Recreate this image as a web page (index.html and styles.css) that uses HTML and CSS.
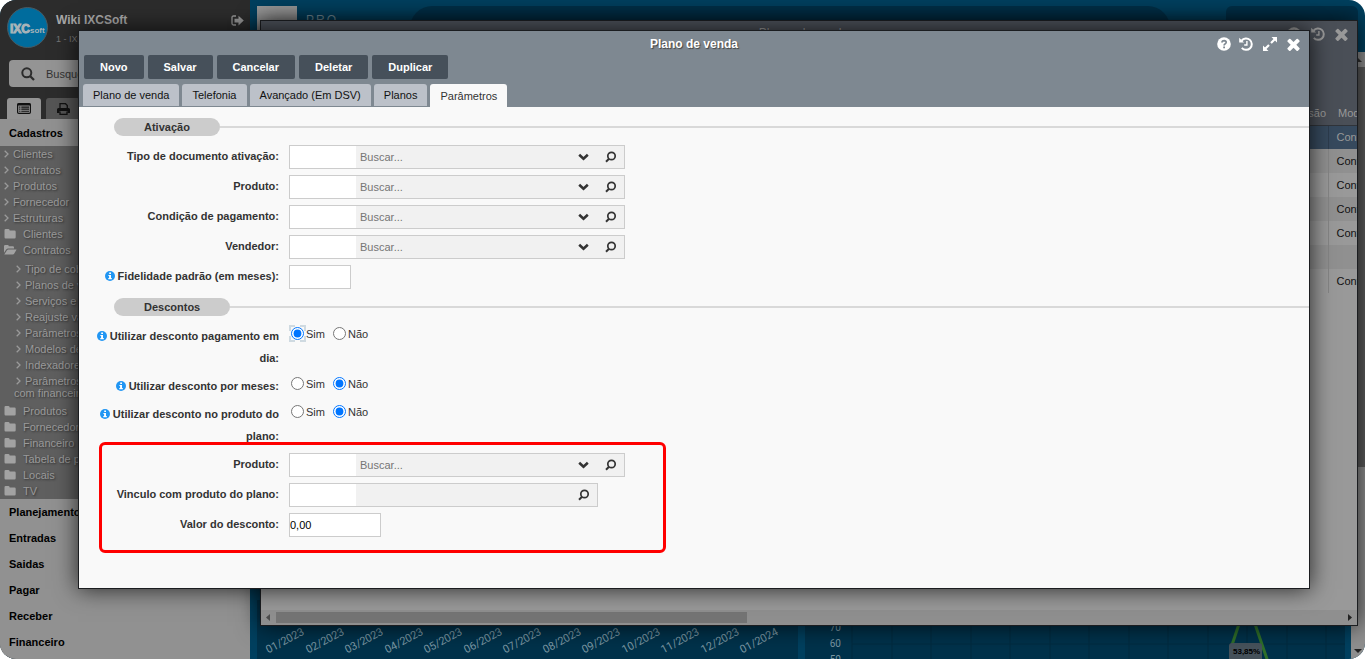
FILE: index.html
```html
<!DOCTYPE html>
<html lang="pt-BR">
<head>
<meta charset="utf-8">
<meta name="viewport" content="width=device-width, initial-scale=1">
<title>Plano de venda</title>
<link rel="stylesheet" href="styles.css">
</head>
<body>
<svg class="defs" aria-hidden="true">
  <symbol id="i-times" viewBox="300 300 1190 1254"><path d="M1490 1322q0 40-28 68l-136 136q-28 28-68 28t-68-28l-294-294-294 294q-28 28-68 28t-68-28l-136-136q-28-28-28-68t28-68l294-294-294-294q-28-28-28-68t28-68l136-136q28-28 68-28t68 28l294 294 294-294q28-28 68-28t68 28l136 136q28 28 28 68t-28 68l-294 294 294 294q28 28 28 68z" fill="currentColor"/></symbol>
  <symbol id="i-help" viewBox="0 0 14 14"><circle cx="7" cy="7" r="6.8" fill="currentColor"/><path d="M4.7 5.4Q5.2 3.6 7.1 3.6Q9.2 3.7 9.2 5.3Q9.2 6.3 8 6.9Q7.1 7.4 7.1 8.5" fill="none" stroke="var(--hole)" stroke-width="1.7"/><path d="M6.2 9.5h1.8v1.7H6.2z" fill="var(--hole)"/></symbol>
  <symbol id="i-history" viewBox="0 0 14 14"><path d="M2.6 3.6A5.7 5.7 0 1 1 2.8 10.9" fill="none" stroke="currentColor" stroke-width="2"/><path d="M0.2 .8V5.4H5z" fill="currentColor"/><path d="M7.9 4v4H5.2" fill="none" stroke="currentColor" stroke-width="1.4"/></symbol>
  <symbol id="i-expand" viewBox="0 0 14 14"><path d="M8.5 0H14v5.500zM0 8.500V14h5.500z" fill="currentColor"/><path d="M11.800 2.200L8 6M6 8L2.200 11.800" stroke="currentColor" stroke-width="2.200" fill="none"/></symbol>
  <symbol id="i-info" viewBox="0 0 10 10"><circle cx="5" cy="5" r="5" fill="#2196f3"/><path d="M4.200 1.500h1.800v1.500H4.200zM3.400 3.900H6v3.200h.8v1.200H3.300V7.100h.8V5h-.7z" fill="#fff"/></symbol>
  <symbol id="i-down" viewBox="0 0 11 8"><path d="M1.200 1.700L5.500 5.700L9.800 1.700" fill="none" stroke="currentColor" stroke-width="2.600"/></symbol>
  <symbol id="i-find" viewBox="0 0 12 12"><circle cx="6.500" cy="5" r="3.700" fill="none" stroke="currentColor" stroke-width="1.700"/><path d="M4 7.700L1 10.700" stroke="currentColor" stroke-width="2"/></symbol>
  <symbol id="i-right" viewBox="0 0 5 8"><path d="M.7 .7L4 4L.7 7.300" fill="none" stroke="currentColor" stroke-width="1.300"/></symbol>
  <symbol id="i-folder" viewBox="0 0 12 10"><path d="M0 1.200Q0 0 1.200 0H4Q5.200 0 5.200 1.500H10Q11.200 1.500 11.200 2.700V8.300Q11.200 9.500 10 9.500H1.200Q0 9.500 0 8.300z" fill="currentColor"/></symbol>
  <symbol id="i-folder-open" viewBox="0 0 13 10"><path d="M0 7.700V1.200Q0 0 1.200 0H3.600Q4.800 0 4.800 1.300H8.800Q10 1.300 10 2.500V3.600H4.200Q3 3.600 2.200 4.600zM.3 9.500L3 5.300Q3.500 4.500 4.300 4.500H12.600L10.300 8.500Q9.700 9.500 8.700 9.500z" fill="currentColor"/></symbol>
  <symbol id="i-logout" viewBox="0 0 13 12"><path d="M5 1H2.500Q1 1 1 2.500V8.500Q1 10 2.500 10H5" fill="none" stroke="currentColor" stroke-width="1.300"/><path d="M3.500 3.800H7.500V.8L12.800 5.600L7.500 10.400V7.400H3.500z" fill="currentColor"/></symbol>
  <symbol id="i-search" viewBox="0 0 14 14"><circle cx="5.800" cy="5.800" r="4.500" fill="none" stroke="currentColor" stroke-width="2"/><path d="M9 9L13 13" stroke="currentColor" stroke-width="2.300"/></symbol>
  <symbol id="i-list" viewBox="0 0 14 11"><rect x=".6" y=".6" width="12.800" height="9.800" rx="1.200" fill="none" stroke="currentColor" stroke-width="1.200"/><path d="M.6 1.500H13.400" stroke="currentColor" stroke-width="2"/><path d="M2.200 4.100h1.200M4.300 4.100H12M2.200 6.100h1.200M4.300 6.100H12M2.200 8.200h1.200M4.300 8.200H12" stroke="currentColor" stroke-width="1.100"/></symbol>
  <symbol id="i-print" viewBox="0 0 13 12"><path d="M3 5V.7H8.500L10.300 2.500V5" fill="none" stroke="currentColor" stroke-width="1.300"/><path d="M0 6.500Q0 5 1.500 5H11.500Q13 5 13 6.500V10H10.500V8H2.500V10H0z" fill="currentColor"/><path d="M3 8.500V11.300H10V8.500" fill="none" stroke="currentColor" stroke-width="1.300"/></symbol>
</svg>

<div class="app">
  <aside class="sidebar">
    <div class="profile">
      <svg class="avatar" viewBox="0 0 42 42" role="img" aria-label="IXCsoft"><circle cx="21.500" cy="21.500" r="20" fill="#006c9d" stroke="#4a5960"/><text x="4" y="27" class="logo-mark"><tspan class="logo-big">IXC</tspan><tspan class="logo-small">soft</tspan></text></svg>
      <div class="who"><strong>Wiki IXCSoft</strong><span>1 - IXCSoft</span></div>
      <a href="#" class="logout" aria-label="Sair"><svg width="13" height="12"><use href="#i-logout"/></svg></a>
    </div>
    <label class="search"><svg width="14" height="14"><use href="#i-search"/></svg><input type="text" placeholder="Busque" aria-label="Busque"></label>
    <div class="side-tabs">
      <button type="button" class="side-tab on" aria-label="Menu"><svg width="14" height="11"><use href="#i-list"/></svg></button>
      <button type="button" class="side-tab" aria-label="Imprimir"><svg width="13" height="12"><use href="#i-print"/></svg></button>
    </div>
    <a href="#" class="group">Cadastros</a>
    <ul class="tree">
      <li><a href="#"><svg width="5" height="8"><use href="#i-right"/></svg>Clientes</a></li>
      <li><a href="#"><svg width="5" height="8"><use href="#i-right"/></svg>Contratos</a></li>
      <li><a href="#"><svg width="5" height="8"><use href="#i-right"/></svg>Produtos</a></li>
      <li><a href="#"><svg width="5" height="8"><use href="#i-right"/></svg>Fornecedor</a></li>
      <li><a href="#"><svg width="5" height="8"><use href="#i-right"/></svg>Estruturas</a></li>
      <li class="folder"><a href="#"><svg width="12" height="10"><use href="#i-folder"/></svg>Clientes</a></li>
      <li class="folder"><a href="#"><svg width="13" height="10"><use href="#i-folder-open"/></svg>Contratos</a>
        <ul class="subtree">
          <li><a href="#"><svg width="5" height="8"><use href="#i-right"/></svg>Tipo de cobrança</a></li>
          <li><a href="#"><svg width="5" height="8"><use href="#i-right"/></svg>Planos de venda</a></li>
          <li><a href="#"><svg width="5" height="8"><use href="#i-right"/></svg>Serviços e produtos</a></li>
          <li><a href="#"><svg width="5" height="8"><use href="#i-right"/></svg>Reajuste valores</a></li>
          <li><a href="#"><svg width="5" height="8"><use href="#i-right"/></svg>Parâmetros</a></li>
          <li><a href="#"><svg width="5" height="8"><use href="#i-right"/></svg>Modelos de contrato</a></li>
          <li><a href="#"><svg width="5" height="8"><use href="#i-right"/></svg>Indexadores</a></li>
          <li><a href="#"><svg width="5" height="8"><use href="#i-right"/></svg>Parâmetros<br>com financeiro</a></li>
        </ul>
      </li>
      <li class="folder"><a href="#"><svg width="12" height="10"><use href="#i-folder"/></svg>Produtos</a></li>
      <li class="folder"><a href="#"><svg width="12" height="10"><use href="#i-folder"/></svg>Fornecedor</a></li>
      <li class="folder"><a href="#"><svg width="12" height="10"><use href="#i-folder"/></svg>Financeiro</a></li>
      <li class="folder"><a href="#"><svg width="12" height="10"><use href="#i-folder"/></svg>Tabela de preço</a></li>
      <li class="folder"><a href="#"><svg width="12" height="10"><use href="#i-folder"/></svg>Locais</a></li>
      <li class="folder"><a href="#"><svg width="12" height="10"><use href="#i-folder"/></svg>TV</a></li>
    </ul>
    <nav class="groups">
      <a href="#" class="group">Planejamento</a>
      <a href="#" class="group">Entradas</a>
      <a href="#" class="group">Saidas</a>
      <a href="#" class="group">Pagar</a>
      <a href="#" class="group">Receber</a>
      <a href="#" class="group">Financeiro</a>
    </nav>
  </aside>

  <main class="dash">
    <div class="dash-top"><div class="brand-box"></div><div class="brand">PRO —</div><div class="pill"></div><div class="corner"></div></div>
    <div class="dash-body">
      <div class="charts">
        <svg class="chart">
          <g class="axis">
            <text transform="translate(48 34) rotate(-28)">01/2023</text><text transform="translate(88 34) rotate(-28)">02/2023</text><text transform="translate(127 34) rotate(-28)">03/2023</text><text transform="translate(167 34) rotate(-28)">04/2023</text><text transform="translate(206 34) rotate(-28)">05/2023</text><text transform="translate(246 34) rotate(-28)">06/2023</text><text transform="translate(285 34) rotate(-28)">07/2023</text><text transform="translate(325 34) rotate(-28)">08/2023</text><text transform="translate(364 34) rotate(-28)">09/2023</text><text transform="translate(404 34) rotate(-28)">10/2023</text><text transform="translate(443 34) rotate(-28)">11/2023</text><text transform="translate(483 34) rotate(-28)">12/2023</text><text transform="translate(522 34) rotate(-28)">01/2024</text>
          </g>
        </svg>
        <svg class="chart">
          <path d="M47 44H541M47 0V59M87 0V59M126 0V59M166 0V59M205 0V59M245 0V59M284 0V59M324 0V59M363 0V59M403 0V59M442 0V59M482 0V59M521 0V59" stroke="#002a40" fill="none"/>
          <g class="axis small"><text x="36" y="31">70</text><text x="36" y="47">60</text><text x="36" y="63">50</text></g>
          <path d="M427 45L434 24M450 24L463 62" stroke="#2f6f2a" stroke-width="3" fill="none"/>
          <rect x="424" y="43" width="33" height="20" rx="3" fill="#46525b"/><text x="428" y="54" class="tag">53,85%</text>
        </svg>
      </div>
      <div class="vscroll"><svg width="14" height="15" viewBox="0 0 14 15"><path d="M3 10L7 6L11 10z" fill="#333"/></svg><i></i><svg width="14" height="15" viewBox="0 0 14 15"><path d="M3 5H11L7 9z" fill="#222"/></svg></div>
    </div>
  </main>

  <section class="win back" aria-label="Planos de venda">
    <header class="back-head">
      <h2>Planos de venda</h2>
      <div class="tools"><button type="button" aria-label="Ajuda"><svg width="14" height="14"><use href="#i-help"/></svg></button><button type="button" aria-label="Histórico"><svg width="14" height="14"><use href="#i-history"/></svg></button><button type="button" aria-label="Fechar"><svg width="13" height="13"><use href="#i-times"/></svg></button></div>
    </header>
    <div class="back-body">
      <table class="grid">
        <thead><tr><th>Comissão</th><th class="last">Modelo</th></tr></thead>
        <tbody>
          <tr class="sel"><td></td><td class="last">Contrato</td></tr>
          <tr><td></td><td class="last">Contrato</td></tr>
          <tr><td></td><td class="last">Contrato</td></tr>
          <tr><td></td><td class="last">Contrato</td></tr>
          <tr><td></td><td class="last">Contrato</td></tr>
          <tr><td></td><td class="last"></td></tr>
          <tr><td></td><td class="last">Contrato</td></tr>
        </tbody>
      </table>
    </div>
    <div class="hscroll"><svg width="15" height="15" viewBox="0 0 15 15"><path d="M9 4V11L5 7.500z" fill="#4c4c4c"/></svg><i></i><svg width="15" height="15" viewBox="0 0 15 15"><path d="M6 4V11L10 7.500z" fill="#222"/></svg></div>
  </section>

  <section class="win modal" role="dialog" aria-labelledby="modal-title">
    <header class="modal-head">
      <div class="bar">
        <h1 id="modal-title">Plano de venda</h1>
        <div class="tools"><button type="button" aria-label="Ajuda"><svg width="14" height="14"><use href="#i-help"/></svg></button><button type="button" aria-label="Histórico"><svg width="14" height="14"><use href="#i-history"/></svg></button><button type="button" aria-label="Expandir"><svg width="14" height="14"><use href="#i-expand"/></svg></button><button type="button" aria-label="Fechar"><svg width="13" height="13"><use href="#i-times"/></svg></button></div>
      </div>
      <div class="actions"><button type="button">Novo</button><button type="button">Salvar</button><button type="button">Cancelar</button><button type="button">Deletar</button><button type="button">Duplicar</button></div>
      <div class="tabs" role="tablist"><button type="button" role="tab">Plano de venda</button><button type="button" role="tab">Telefonia</button><button type="button" role="tab">Avançado (Em DSV)</button><button type="button" role="tab">Planos</button><button type="button" role="tab" class="on" aria-selected="true">Parâmetros</button></div>
    </header>
    <form class="form">
      <h3 class="section"><span>Ativação</span></h3>
      <div class="rows">
        <div class="row"><label for="f1">Tipo de documento ativação:</label><div class="combo"><input class="code" id="f1" type="text"><input class="find" type="text" placeholder="Buscar..." aria-label="Buscar tipo de documento"><button type="button" aria-label="Abrir lista"><svg width="11" height="8"><use href="#i-down"/></svg></button><button type="button" aria-label="Pesquisar"><svg width="12" height="12"><use href="#i-find"/></svg></button></div></div>
        <div class="row"><label for="f2">Produto:</label><div class="combo"><input class="code" id="f2" type="text"><input class="find" type="text" placeholder="Buscar..." aria-label="Buscar produto"><button type="button" aria-label="Abrir lista"><svg width="11" height="8"><use href="#i-down"/></svg></button><button type="button" aria-label="Pesquisar"><svg width="12" height="12"><use href="#i-find"/></svg></button></div></div>
        <div class="row"><label for="f3">Condição de pagamento:</label><div class="combo"><input class="code" id="f3" type="text"><input class="find" type="text" placeholder="Buscar..." aria-label="Buscar condição"><button type="button" aria-label="Abrir lista"><svg width="11" height="8"><use href="#i-down"/></svg></button><button type="button" aria-label="Pesquisar"><svg width="12" height="12"><use href="#i-find"/></svg></button></div></div>
        <div class="row"><label for="f4">Vendedor:</label><div class="combo"><input class="code" id="f4" type="text"><input class="find" type="text" placeholder="Buscar..." aria-label="Buscar vendedor"><button type="button" aria-label="Abrir lista"><svg width="11" height="8"><use href="#i-down"/></svg></button><button type="button" aria-label="Pesquisar"><svg width="12" height="12"><use href="#i-find"/></svg></button></div></div>
        <div class="row"><label for="f5"><svg class="info" width="10" height="10"><use href="#i-info"/></svg>Fidelidade padrão (em meses):</label><input class="box short" id="f5" type="text"></div>
      </div>
      <h3 class="section"><span>Descontos</span></h3>
      <div class="rows">
        <div class="row"><span class="lbl" id="l6"><svg class="info" width="10" height="10"><use href="#i-info"/></svg>Utilizar desconto pagamento em dia:</span><div class="radios" role="radiogroup" aria-labelledby="l6"><label><span class="dot active"><input type="radio" name="r1" checked></span>Sim</label><label><span class="dot"><input type="radio" name="r1"></span>Não</label></div></div>
        <div class="row"><span class="lbl" id="l7"><svg class="info" width="10" height="10"><use href="#i-info"/></svg>Utilizar desconto por meses:</span><div class="radios" role="radiogroup" aria-labelledby="l7"><label><span class="dot"><input type="radio" name="r2"></span>Sim</label><label><span class="dot"><input type="radio" name="r2" checked></span>Não</label></div></div>
        <div class="row"><span class="lbl" id="l8"><svg class="info" width="10" height="10"><use href="#i-info"/></svg>Utilizar desconto no produto do plano:</span><div class="radios" role="radiogroup" aria-labelledby="l8"><label><span class="dot"><input type="radio" name="r3"></span>Sim</label><label><span class="dot"><input type="radio" name="r3" checked></span>Não</label></div></div>
        <div class="rows marked">
          <div class="row"><label for="f9">Produto:</label><div class="combo"><input class="code" id="f9" type="text"><input class="find" type="text" placeholder="Buscar..." aria-label="Buscar produto do desconto"><button type="button" aria-label="Abrir lista"><svg width="11" height="8"><use href="#i-down"/></svg></button><button type="button" aria-label="Pesquisar"><svg width="12" height="12"><use href="#i-find"/></svg></button></div></div>
          <div class="row"><label for="f10">Vinculo com produto do plano:</label><div class="combo narrow"><input class="code" id="f10" type="text"><input class="find" type="text" aria-label="Produto do plano"><button type="button" aria-label="Pesquisar"><svg width="12" height="12"><use href="#i-find"/></svg></button></div></div>
          <div class="row"><label for="f11">Valor do desconto:</label><input class="box" id="f11" type="text" value="0,00"></div>
        </div>
      </div>
    </form>
  </section>
</div>
</body>
</html>
```
FILE: styles.css
```css
*, *::before, *::after { box-sizing: border-box; }
body { margin: 0; background: #fff; font-family: "Liberation Sans", Arial, sans-serif; font-size: 11px; color: #333; }
button, input { font: inherit; margin: 0; padding: 0; border: 0; background: none; color: inherit; }
a { color: inherit; text-decoration: none; }
ul { list-style: none; margin: 0; padding: 0; }
h1, h2, h3 { margin: 0; font-size: 12px; }
svg { display: block; flex: none; }
.defs { position: absolute; width: 0; height: 0; }

.app { position: relative; display: flex; height: 100vh; overflow: hidden; border-radius: 16px; background: #00405f; }

/* Sidebar */
.sidebar { width: 250px; flex: none; display: flex; flex-direction: column; background: #2c2c2c; white-space: nowrap; overflow: hidden; }
.profile { display: flex; gap: 8px; padding: 6px 6px 0 6px; height: 60px; flex: none; }
.avatar { width: 42px; height: 42px; }
.logo-mark { font-weight: bold; fill: #a9b4b9; stroke: #a9b4b9; }
.logo-big { font-size: 12px; }
.logo-small { font-size: 8px; stroke: none; }
.who { flex: 1; display: flex; flex-direction: column; gap: 6px; padding-top: 6px; }
.who strong { font-size: 12px; line-height: 16px; color: #a8a8a8; }
.who span { font-size: 9px; line-height: 10px; color: #747474; }
.logout { padding-top: 9px; color: #999; }
.search { display: flex; align-items: center; gap: 11px; height: 27px; margin: 0 10px 0 9px; padding-left: 12px; flex: none; border-radius: 4px; background: #949494; color: #2c2c2c; }
.search input { flex: 1; min-width: 0; }
.search input::placeholder { color: #333; }
.side-tabs { display: flex; gap: 5px; padding: 11px 7px 0; flex: none; }
.side-tab { display: flex; justify-content: center; align-items: center; width: 34px; height: 21px; border-radius: 3px 3px 0 0; background: #555; color: #111; }
.side-tab.on { background: #949494; }
.group { display: block; height: 26px; padding-left: 9px; flex: none; font-weight: bold; line-height: 26px; color: #000; background: #919191; }
.sidebar > .group { height: 27px; line-height: 28px; }
.groups { flex: 1; background: #919191; }
.tree { flex: none; background: #5f5f5f; color: #9a9a9a; line-height: 12px; text-shadow: 1px 1px 2px #333; }
.tree a { display: block; padding: 2px 0 2px 4px; }
.tree svg { display: inline-block; margin-right: 4px; vertical-align: 0; }
.folder svg { width: 13px; margin-right: 6px; vertical-align: -1px; color: #a2a2a2; }
.subtree { padding: 3px 0 2px; }
.subtree a { padding-left: 14px; }
.subtree svg { width: 5px; margin: 0 4px 0 2px; vertical-align: 0; color: inherit; }

/* Dashboard */
.dash { flex: 1; min-width: 0; display: flex; flex-direction: column; }
.dash-top { display: flex; height: 52px; flex: none; padding: 6px 7px 0; }
.brand-box { width: 40px; background: #999; }
.brand { width: 113px; padding: 7px 0 0 9px; font-size: 12px; letter-spacing: 2px; white-space: nowrap; color: #76909c; }
.pill { flex: 1; max-width: 760px; border-radius: 22px; background: #003049; }
.corner { width: 132px; margin-left: auto; border-radius: 6px; background: #003049; }
.dash-body { flex: 1; min-height: 0; display: flex; }
.charts { flex: 1; min-width: 0; display: flex; align-items: flex-end; gap: 7px; padding: 0 6px 0 7px; }
.chart { flex: 1; min-width: 0; height: 59px; background: #00324b; }
.axis { font-family: Roboto, sans-serif; font-size: 11px; fill: #7b97a3; text-anchor: end; }
.axis.small { font-size: 10px; }
.tag { font-size: 8px; font-weight: bold; fill: #000; }
.vscroll { width: 14px; display: flex; flex-direction: column; background: #8f8f8f; }
.vscroll i { height: 400px; background: #5c5c5c; }
.vscroll svg:last-child { margin-top: auto; }

/* Floating windows */
.win { position: absolute; display: flex; flex-direction: column; overflow: hidden; border: 1px solid #1b1d20; box-shadow: 0 0 22px rgba(0, 0, 0, .75); }
.tools { display: flex; align-items: center; gap: 8px; }
.tools button { display: flex; }
.back { inset: 20px 7px 33px 260px; background: #999; }
.back-head { display: flex; justify-content: space-between; height: 26px; flex: none; padding: 0 9px 0 0; background: #4a4f57; color: #999; --hole: #4a4f57; }
.back-head h2 { flex: 1; padding-top: 5px; padding-left: 59px; text-align: center; font-weight: normal; }
.back-head .tools { gap: 10px; }
.back-body { flex: 1; min-height: 0; overflow: hidden; background: #999; }
.grid { width: 100%; border-collapse: collapse; table-layout: fixed; }
.grid th { height: 78px; padding: 0 2px 6px; text-align: right; vertical-align: bottom; font-weight: normal; color: #999; background: #4a4f57; border-bottom: 1px solid #30343a; }
.grid td { height: 24px; padding: 0 8px; border-right: 1px solid #858585; color: #111; overflow: hidden; white-space: nowrap; }
.grid .last { width: 29px; padding-right: 0; border-right: 0; text-align: left; overflow: hidden; }
.grid th.last { padding-left: 10px; }
.grid tbody tr:nth-child(even) { background: #909090; }
.grid tbody tr:nth-child(odd) { background: #999; }
.grid tbody tr.sel { background: #36495d; }
.grid tr.sel td { color: #999; border-color: #2c3c4c; }
.hscroll { display: flex; align-items: center; height: 15px; flex: none; background: #8f8f8f; }
.hscroll i { width: 43%; height: 11px; background: #747474; }
.hscroll svg:last-child { margin-left: auto; }

.modal { inset: 30px 55px 70px 78px; background: #f9f9f9; }
.modal-head { flex: none; background: #7e8891; color: #fff; --hole: #7e8891; }
.bar { display: grid; grid-template-columns: 1fr auto 1fr; align-items: center; height: 24px; padding: 2px 9px 0; }
.bar h1 { grid-column: 2; text-shadow: 1px 1px 1px #444; }
.bar .tools { justify-self: end; }
.bar .tools button:last-child { margin-left: 2px; }
.bar .tools button:nth-child(3) { margin-left: 2px; }
.actions { display: flex; gap: 4px; padding: 0 5px; }
.actions button { height: 24px; padding: 0 16px; border-radius: 2px; background: #46505a; font-weight: bold; }
.tabs { display: flex; gap: 3px; height: 28px; padding: 5px 4px 0; }
.tabs button { height: 22px; padding: 0 10px; border-radius: 3px 3px 0 0; background: #bcc1c9; color: #111; }
.tabs .on { height: 23px; background: #f9f9f9; color: #333; }

.form { flex: 1; min-height: 0; padding-top: 11px; }
.section { display: flex; align-items: center; margin-left: 35px; font-size: 11px; line-height: 18px; }
.section span { padding: 0 30px; border-radius: 9px; background: #ccc; }
.section::after { content: ""; flex: 1; height: 2px; background: #d9d9d9; }
.rows { display: flex; flex-direction: column; gap: 6px; }
.form > .rows { padding: 9px 0; }
.row { display: grid; grid-template-columns: 200px 1fr; column-gap: 10px; align-items: start; }
.row > label, .lbl { text-align: right; font-weight: bold; line-height: 22px; }
.info { display: inline-block; margin-right: 3px; vertical-align: -1px; }
.combo { display: flex; width: 336px; height: 24px; border: 1px solid #ccc; background: #f1f1f1; }
.combo.narrow { width: 309px; }
.combo .code { width: 66px; background: #fff; }
.combo .find { flex: 1; min-width: 0; padding-left: 4px; }
.combo .find::placeholder { color: #757575; }
.combo button { display: flex; align-items: center; justify-content: center; width: 27px; }
.box { width: 92px; height: 24px; border: 1px solid #ccc; background: #fff; color: #000; }
.box.short { width: 62px; }
.radios { display: flex; gap: 6px; line-height: 18px; }
.radios label { display: flex; }
.dot { display: flex; align-items: center; justify-content: center; width: 17px; height: 17px; }
.dot.active { border: 2px dashed #cfdae1; }
.dot input { flex: none; width: 13px; height: 13px; accent-color: #0075ff; }
.marked { position: relative; }
.marked::before { content: ""; position: absolute; top: -11px; left: 20px; width: 567px; bottom: -16px; border: 3px solid #f00; border-radius: 6px; pointer-events: none; }
```
